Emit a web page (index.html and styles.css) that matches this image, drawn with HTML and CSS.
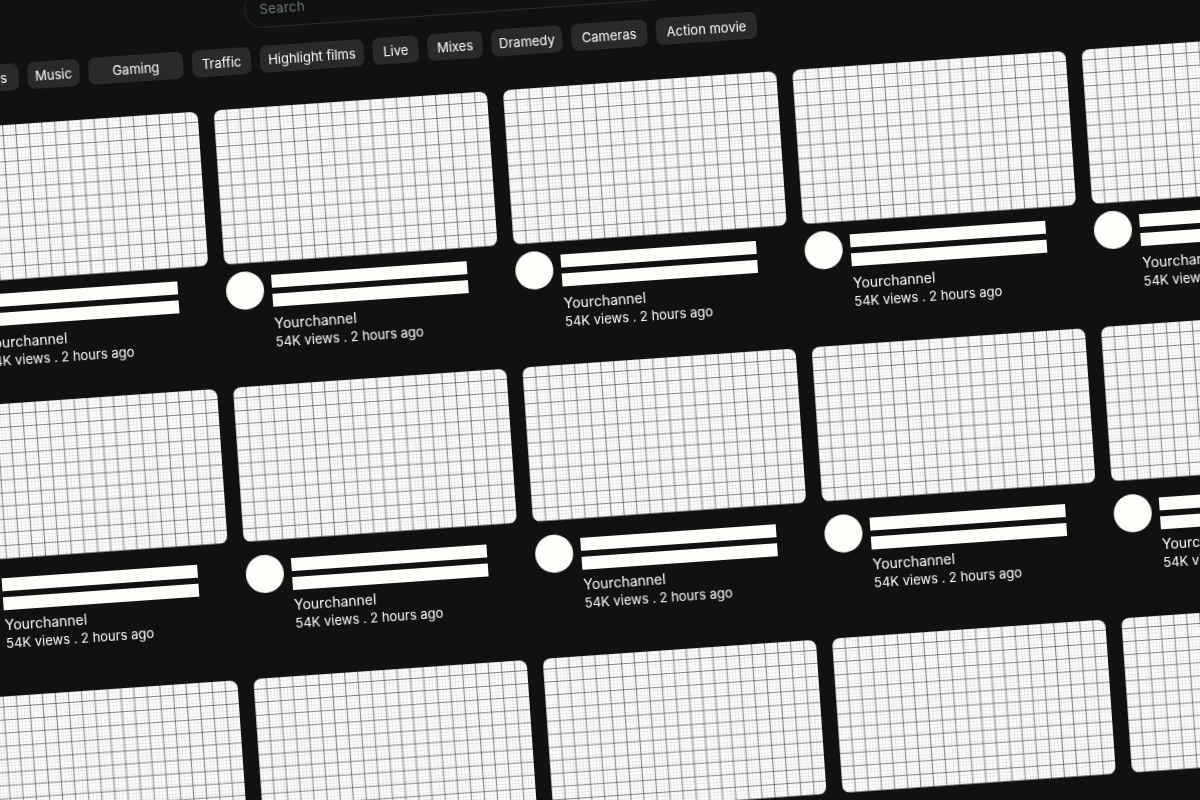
FILE: index.html
```html
<!DOCTYPE html>
<html lang="en">
<head>
    <meta charset="UTF-8">
    <meta name="viewport" content="width=device-width, initial-scale=1.0">
    <title>Video wireframe</title>
    <link rel="stylesheet" href="styles.css">
</head>
<body>
    <div class="board">
        <div class="search">Search</div>

        <div class="chips">
            <div class="chip chip-news">News</div>
            <div class="chip chip-music">Music</div>
            <div class="chip chip-gaming">Gaming</div>
            <div class="chip chip-traffic">Traffic</div>
            <div class="chip chip-highlight">Highlight films</div>
            <div class="chip chip-live">Live</div>
            <div class="chip chip-mixes">Mixes</div>
            <div class="chip chip-dramedy">Dramedy</div>
            <div class="chip chip-cameras">Cameras</div>
            <div class="chip chip-action">Action movie</div>
        </div>

        <div class="row row-first">
            <div class="video"><div class="thumb"></div><div class="meta"><div class="avatar"></div><div class="info"><div class="bar"></div><div class="bar"></div><div class="channel">Yourchannel</div><div class="stats">54K views . 2 hours ago</div></div></div></div>
            <div class="video"><div class="thumb"></div><div class="meta"><div class="avatar"></div><div class="info"><div class="bar"></div><div class="bar"></div><div class="channel">Yourchannel</div><div class="stats">54K views . 2 hours ago</div></div></div></div>
            <div class="video"><div class="thumb"></div><div class="meta"><div class="avatar"></div><div class="info"><div class="bar"></div><div class="bar"></div><div class="channel">Yourchannel</div><div class="stats">54K views . 2 hours ago</div></div></div></div>
            <div class="video"><div class="thumb"></div><div class="meta"><div class="avatar"></div><div class="info"><div class="bar"></div><div class="bar"></div><div class="channel">Yourchannel</div><div class="stats">54K views . 2 hours ago</div></div></div></div>
            <div class="video"><div class="thumb"></div><div class="meta"><div class="avatar"></div><div class="info"><div class="bar"></div><div class="bar"></div><div class="channel">Yourchannel</div><div class="stats">54K views . 2 hours ago</div></div></div></div>
        </div>

        <div class="row row-second">
            <div class="video"><div class="thumb"></div><div class="meta"><div class="avatar"></div><div class="info"><div class="bar"></div><div class="bar"></div><div class="channel">Yourchannel</div><div class="stats">54K views . 2 hours ago</div></div></div></div>
            <div class="video"><div class="thumb"></div><div class="meta"><div class="avatar"></div><div class="info"><div class="bar"></div><div class="bar"></div><div class="channel">Yourchannel</div><div class="stats">54K views . 2 hours ago</div></div></div></div>
            <div class="video"><div class="thumb"></div><div class="meta"><div class="avatar"></div><div class="info"><div class="bar"></div><div class="bar"></div><div class="channel">Yourchannel</div><div class="stats">54K views . 2 hours ago</div></div></div></div>
            <div class="video"><div class="thumb"></div><div class="meta"><div class="avatar"></div><div class="info"><div class="bar"></div><div class="bar"></div><div class="channel">Yourchannel</div><div class="stats">54K views . 2 hours ago</div></div></div></div>
            <div class="video"><div class="thumb"></div><div class="meta"><div class="avatar"></div><div class="info"><div class="bar"></div><div class="bar"></div><div class="channel">Yourchannel</div><div class="stats">54K views . 2 hours ago</div></div></div></div>
        </div>

        <div class="row">
            <div class="video"><div class="thumb"></div></div>
            <div class="video"><div class="thumb"></div></div>
            <div class="video"><div class="thumb"></div></div>
            <div class="video"><div class="thumb"></div></div>
            <div class="video"><div class="thumb"></div></div>
        </div>
    </div>
</body>
</html>
```

FILE: styles.css
```css
* {
    margin: 0;
    padding: 0;
    box-sizing: border-box;
}

html, body {
    height: 100%;
    overflow: hidden;
}

body {
    background: #111111;
    font-family: Inter, "Noto Sans", sans-serif;
    color: #fdfdf9;
}

/* whole page is tilted, the children stay in normal flow */
.board {
    width: 1500px;
    margin-left: -85px;
    padding-top: 15px;
    transform: rotate(-4deg);
    transform-origin: 0 0;
    filter: blur(0.3px);
}

.search {
    width: 520px;
    height: 37px;
    margin-left: 328px;
    padding: 0 14px;
    line-height: 34px;
    font-size: 13px;
    letter-spacing: 0.4px;
    color: #6e7b80;
    border: 1px solid #2b2b2b;
    border-radius: 17px;
}

.chips {
    display: flex;
    gap: 9px;
    height: 27px;
    margin-top: 18px;
    margin-left: 40px;
    margin-bottom: 34px;
}

.chip {
    display: flex;
    align-items: center;
    justify-content: center;
    font-size: 13px;
    white-space: nowrap;
    background: #2a2a2a;
    border-radius: 7px;
}

.chip-news { width: 58px; }
.chip-music { width: 52px; }
.chip-gaming { width: 95px; }
.chip-traffic { width: 59px; }
.chip-highlight { width: 104px; }
.chip-live { width: 46px; }
.chip-mixes { width: 55px; }
.chip-dramedy { width: 71px; }
.chip-cameras { width: 76px; }
.chip-action { width: 101px; }

.row {
    display: flex;
    gap: 16px;
}

.row-first {
    height: 278px;
}

.row-second {
    height: 292px;
}

.video {
    flex: 0 0 274px;
}

.thumb {
    height: 155px;
    border-radius: 8px;
    background-color: #ffffff;
    background-image:
        linear-gradient(90deg, rgba(50, 50, 50, 0.6) 1px, transparent 1px),
        linear-gradient(rgba(50, 50, 50, 0.6) 1px, transparent 1px),
        linear-gradient(90deg, rgba(90, 90, 90, 0.13) 1px, transparent 1px),
        linear-gradient(rgba(90, 90, 90, 0.13) 1px, transparent 1px);
    background-size: 13.1px 13.1px, 13.1px 13.1px, 3.3px 3.3px, 3.3px 3.3px;
    background-position: 12.5px 10px, 12.5px 10px, 0 0, 0 0;
}

.meta {
    display: flex;
    gap: 8px;
    padding-top: 8px;
}

.row-second .meta {
    padding-top: 14px;
}

.avatar {
    flex: 0 0 38px;
    height: 38px;
    background: #fdfdf9;
    border-radius: 50%;
}

.info {
    padding-top: 5px;
}

.bar {
    width: 196px;
    height: 13px;
    margin-bottom: 6px;
    background: #fdfdf9;
}

.channel {
    margin-top: 8px;
    font-size: 14px;
    line-height: 18px;
}

.row-second .channel {
    margin-top: 3px;
}

.stats {
    font-size: 13px;
    line-height: 18px;
    white-space: nowrap;
}
```
